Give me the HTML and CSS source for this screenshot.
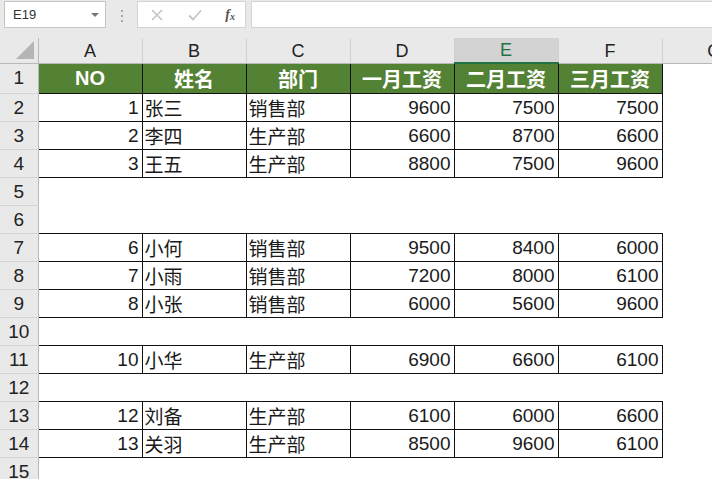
FILE: index.html
```html
<!DOCTYPE html>
<html>
  <head>
    <title>工资表</title>
    <meta charset="utf-8" />
    <link rel="stylesheet" href="styles.css">
  </head>
  <body>
    <div class="formula-bar">
      <div class="name-box">
        <span>E19</span>
        <span class="caret"></span>
      </div>
      <div class="grip"><i></i><i></i><i></i></div>
      <div class="fx-box">
        <svg width="14" height="14" viewBox="0 0 14 14"><path d="M2 2 L12 12 M12 2 L2 12" stroke="#c4c4c4" stroke-width="1.6" fill="none"/></svg>
        <svg width="16" height="14" viewBox="0 0 16 14"><path d="M2 7.5 L6 11.5 L14 2.5" stroke="#c4c4c4" stroke-width="1.8" fill="none"/></svg>
        <span class="fx">f<sub>x</sub></span>
      </div>
      <div class="formula-input"></div>
    </div>

    <table class="sheet">
      <colgroup>
        <col class="c-row">
        <col class="c-col"><col class="c-col"><col class="c-col">
        <col class="c-col"><col class="c-col"><col class="c-col"><col class="c-col">
      </colgroup>
      <thead>
        <tr class="col-heads">
          <th class="corner"><span class="tri"></span></th>
          <th>A</th><th>B</th><th>C</th><th>D</th><th class="sel">E</th><th>F</th><th>G</th>
        </tr>
      </thead>
      <tbody>
        <tr>
          <td class="rh">1</td>
          <td class="hd">NO</td><td class="hd">姓名</td><td class="hd">部门</td>
          <td class="hd">一月工资</td><td class="hd">二月工资</td><td class="hd">三月工资</td><td></td>
        </tr>
        <tr>
          <td class="rh">2</td>
          <td class="b num">1</td><td class="b txt">张三</td><td class="b txt">销售部</td>
          <td class="b num">9600</td><td class="b num">7500</td><td class="b num">7500</td><td></td>
        </tr>
        <tr>
          <td class="rh">3</td>
          <td class="b num">2</td><td class="b txt">李四</td><td class="b txt">生产部</td>
          <td class="b num">6600</td><td class="b num">8700</td><td class="b num">6600</td><td></td>
        </tr>
        <tr>
          <td class="rh">4</td>
          <td class="b num">3</td><td class="b txt">王五</td><td class="b txt">生产部</td>
          <td class="b num">8800</td><td class="b num">7500</td><td class="b num">9600</td><td></td>
        </tr>
        <tr>
          <td class="rh">5</td><td></td><td></td><td></td><td></td><td></td><td></td><td></td>
        </tr>
        <tr>
          <td class="rh">6</td><td></td><td></td><td></td><td></td><td></td><td></td><td></td>
        </tr>
        <tr>
          <td class="rh">7</td>
          <td class="b num">6</td><td class="b txt">小何</td><td class="b txt">销售部</td>
          <td class="b num">9500</td><td class="b num">8400</td><td class="b num">6000</td><td></td>
        </tr>
        <tr>
          <td class="rh">8</td>
          <td class="b num">7</td><td class="b txt">小雨</td><td class="b txt">销售部</td>
          <td class="b num">7200</td><td class="b num">8000</td><td class="b num">6100</td><td></td>
        </tr>
        <tr>
          <td class="rh">9</td>
          <td class="b num">8</td><td class="b txt">小张</td><td class="b txt">销售部</td>
          <td class="b num">6000</td><td class="b num">5600</td><td class="b num">9600</td><td></td>
        </tr>
        <tr>
          <td class="rh">10</td><td></td><td></td><td></td><td></td><td></td><td></td><td></td>
        </tr>
        <tr>
          <td class="rh">11</td>
          <td class="b num">10</td><td class="b txt">小华</td><td class="b txt">生产部</td>
          <td class="b num">6900</td><td class="b num">6600</td><td class="b num">6100</td><td></td>
        </tr>
        <tr>
          <td class="rh">12</td><td></td><td></td><td></td><td></td><td></td><td></td><td></td>
        </tr>
        <tr>
          <td class="rh">13</td>
          <td class="b num">12</td><td class="b txt">刘备</td><td class="b txt">生产部</td>
          <td class="b num">6100</td><td class="b num">6000</td><td class="b num">6600</td><td></td>
        </tr>
        <tr>
          <td class="rh">14</td>
          <td class="b num">13</td><td class="b txt">关羽</td><td class="b txt">生产部</td>
          <td class="b num">8500</td><td class="b num">9600</td><td class="b num">6100</td><td></td>
        </tr>
        <tr>
          <td class="rh">15</td><td></td><td></td><td></td><td></td><td></td><td></td><td></td>
        </tr>
      </tbody>
    </table>
  </body>
</html>
```

FILE: styles.css
```css
* {
  box-sizing: border-box;
}
html,
body {
  margin: 0;
  height: 100%;
  overflow: hidden;
  background: #ffffff;
}
body {
  font-family: "Liberation Sans", "Noto Sans CJK SC", sans-serif;
  color: #1a1a1a;
}

/* formula bar */
.formula-bar {
  display: flex;
  align-items: flex-start;
  height: 38px;
  padding-top: 1px;
  background: #e9e9e9;
}
.name-box {
  display: flex;
  align-items: center;
  justify-content: space-between;
  width: 102px;
  height: 27px;
  margin-left: 4px;
  padding: 0 6px 0 8px;
  background: #fff;
  border: 1px solid #c6c6c6;
  font-size: 13px;
  color: #333;
}
.caret {
  width: 0;
  height: 0;
  border-left: 4px solid transparent;
  border-right: 4px solid transparent;
  border-top: 4px solid #777;
}
.grip {
  display: flex;
  flex-direction: column;
  gap: 3px;
  width: 31px;
  padding-top: 9px;
  align-items: center;
}
.grip i {
  display: block;
  width: 2px;
  height: 2px;
  background: #a8a8a8;
}
.fx-box {
  display: flex;
  align-items: center;
  justify-content: space-between;
  width: 109px;
  height: 27px;
  padding: 0 10px 0 12px;
  background: #fff;
  border: 1px solid #d4d4d4;
}
.fx {
  font-family: "Liberation Serif", serif;
  font-style: italic;
  font-weight: bold;
  font-size: 14px;
  color: #555;
}
.fx sub {
  font-size: 10px;
  vertical-align: -1px;
}
.formula-input {
  flex: 1;
  height: 27px;
  margin-left: 5px;
  background: #fff;
  border: 1px solid #d4d4d4;
  border-right: 0;
}

/* sheet */
.sheet {
  border-collapse: collapse;
  table-layout: fixed;
  width: 766px;
}
.c-row {
  width: 38px;
}
.c-col {
  width: 104px;
}
.col-heads th {
  height: 25px;
  padding: 0;
  background: #e9e9e9;
  font-weight: normal;
  font-size: 18px;
  color: #222;
  border-left: 1px solid #d0d0d0;
  border-bottom: 1px solid #b8b8b8;
  vertical-align: bottom;
  line-height: 23px;
}
.col-heads th.sel {
  background: #d3d3d3;
  color: #217346;
  border-bottom: 2px solid #217346;
}
.col-heads th.corner {
  position: relative;
  border-left: 0;
  border-right: 1px solid #b8b8b8;
}
.tri {
  position: absolute;
  right: 4px;
  bottom: 4px;
  width: 0;
  height: 0;
  border-left: 18px solid transparent;
  border-bottom: 18px solid #b5b5b5;
}
.sheet td {
  height: 28px;
  padding: 0;
  font-size: 19px;
  white-space: nowrap;
  overflow: hidden;
}
.sheet td.rh {
  background: #e9e9e9;
  text-align: center;
  color: #222;
  font-size: 19px;
  border-right: 1px solid #b8b8b8;
  border-bottom: 1px solid #d4d4d4;
}
.sheet td.hd {
  background: #548235;
  color: #ffffff;
  font-weight: bold;
  text-align: center;
  font-size: 20px;
  border: 1px solid #111;
}
.sheet td.b {
  border: 1px solid #111;
}
.num {
  text-align: right;
  padding-right: 3px !important;
}
.txt {
  text-align: left;
  padding-left: 2px !important;
  font-size: 20px;
}
```
